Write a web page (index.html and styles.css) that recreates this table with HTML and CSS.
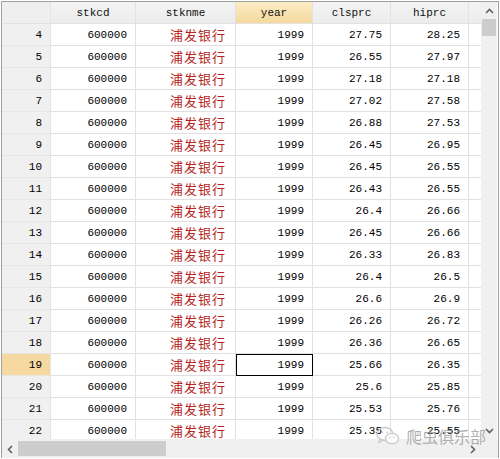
FILE: index.html
```html
<!DOCTYPE html>
<html>
<head>
<meta charset="utf-8">
<link rel="stylesheet" href="styles.css">
</head>
<body>
<div class="window">
  <div class="main">
    <div class="grid-area">
      <div class="grid">
        <div class="hd corner"></div>
        <div class="hd">stkcd</div>
        <div class="hd">stknme</div>
        <div class="hd sel">year</div>
        <div class="hd">clsprc</div>
        <div class="hd">hiprc</div>
        <div class="hd last"></div>
      </div>
      <div class="rows" id="rows"></div>
    </div>
    <div class="vscroll">
      <div class="arrow up"><svg width="9" height="6" viewBox="0 0 9 6"><path d="M1 5 L4.5 1.5 L8 5" fill="none" stroke="#606060" stroke-width="1.6"/></svg></div>
      <div class="vthumb"></div>
      <div class="vtrack"></div>
      <div class="arrow down"><svg width="9" height="6" viewBox="0 0 9 6"><path d="M1 1 L4.5 4.5 L8 1" fill="none" stroke="#606060" stroke-width="1.6"/></svg></div>
    </div>
  </div>
  <div class="bottom">
    <div class="hscroll">
      <div class="harrow"><svg width="6" height="9" viewBox="0 0 6 9"><path d="M5 1 L1.5 4.5 L5 8" fill="none" stroke="#606060" stroke-width="1.6"/></svg></div>
      <div class="hthumb"></div>
      <div class="htrack"></div>
      <div class="harrow"><svg width="6" height="9" viewBox="0 0 6 9"><path d="M1 1 L4.5 4.5 L1 8" fill="none" stroke="#606060" stroke-width="1.6"/></svg></div>
    </div>
    <div class="sc-corner"></div>
  </div>
  <div class="watermark">
    <svg class="wechat" width="24" height="20" viewBox="0 0 24 20">
      <ellipse cx="9" cy="8" rx="8" ry="6.5" fill="none" stroke="#c8c8c8" stroke-width="1.3"/>
      <path d="M4 13 L3 16.5 L7 14.2" fill="none" stroke="#c8c8c8" stroke-width="1.2"/>
      <ellipse cx="16" cy="12.5" rx="6.5" ry="5.2" fill="#fff" fill-opacity="0.85" stroke="#c8c8c8" stroke-width="1.3"/>
      <circle cx="6.3" cy="6.3" r="0.9" fill="#c8c8c8"/>
      <circle cx="11.2" cy="6.3" r="0.9" fill="#c8c8c8"/>
      <circle cx="14" cy="11.3" r="0.8" fill="#c8c8c8"/>
      <circle cx="18" cy="11.3" r="0.8" fill="#c8c8c8"/>
    </svg>
    <span class="wm-text">爬虫俱乐部</span>
  </div>
</div>
<script src="app.js"></script>
</body>
</html>
```
FILE: app.js
```js
var data = [
  [4, "27.75", "28.25"], [5, "26.55", "27.97"], [6, "27.18", "27.18"],
  [7, "27.02", "27.58"], [8, "26.88", "27.53"], [9, "26.45", "26.95"],
  [10, "26.45", "26.55"], [11, "26.43", "26.55"], [12, "26.4", "26.66"],
  [13, "26.45", "26.66"], [14, "26.33", "26.83"], [15, "26.4", "26.5"],
  [16, "26.6", "26.9"], [17, "26.26", "26.72"], [18, "26.36", "26.65"],
  [19, "25.66", "26.35"], [20, "25.6", "25.85"], [21, "25.53", "25.76"],
  [22, "25.35", "25.55"]
];
var html = "";
data.forEach(function (r) {
  var sel = r[0] === 19;
  html += '<div class="grid row">' +
    '<div class="rh' + (sel ? ' sel' : '') + '">' + r[0] + '</div>' +
    '<div class="c num">600000</div>' +
    '<div class="c str">浦发银行</div>' +
    '<div class="c num' + (sel ? ' cur' : '') + '">1999</div>' +
    '<div class="c num">' + r[1] + '</div>' +
    '<div class="c num">' + r[2] + '</div>' +
    '<div class="c"></div>' +
    '</div>';
});
document.getElementById("rows").innerHTML = html;
```
FILE: styles.css
```css
html, body {
  margin: 0;
  padding: 0;
  background: #fff;
}
.window {
  position: relative;
  width: 500px;
  height: 459px;
  box-sizing: border-box;
  border: 1px solid #fff;
  overflow: hidden;
  font-family: "Liberation Mono", "Courier New", monospace;
  font-size: 11px;
  color: #000;
}
.window::before {
  content: "";
  position: absolute;
  inset: 0;
  border-top: 1px solid #a0a0a0;
  border-left: 1px solid #a0a0a0;
  border-right: 1px solid #a0a0a0;
  pointer-events: none;
  z-index: 3;
}
.main {
  display: flex;
  height: 438px;
  padding-top: 1px;
  padding-left: 1px;
  box-sizing: border-box;
}
.grid-area {
  width: 479px;
  overflow: hidden;
  height: 437px;
}
.vscroll {
  width: 16px;
  background: #f0f0f0;
  display: flex;
  flex-direction: column;
  height: 437px;
}
.arrow {
  height: 17px;
  display: flex;
  align-items: center;
  justify-content: center;
}
.vthumb {
  margin: 0 1px;
  height: 17px;
  background: #cdcdcd;
}
.vtrack { flex: 1; }
.grid {
  display: grid;
  grid-template-columns: 49px 85px 100px 77px 78px 78px 40px;
  height: 22px;
}
.hd {
  box-sizing: border-box;
  border-right: 1px solid #e2e2e2;
  border-bottom: 1px solid #e2e2e2;
  background: linear-gradient(#f3f3f3, #ececec);
  display: flex;
  align-items: center;
  justify-content: center;
  color: #111;
  padding-top: 1px;
}
.hd.sel {
  background: linear-gradient(#fcebc4, #f4d99f);
}
.hd.corner {
  background: #efefef;
}
.row { height: 22px; }
.rh, .c {
  box-sizing: border-box;
  border-right: 1px solid #e0e0e0;
  border-bottom: 1px solid #e0e0e0;
  display: flex;
  align-items: center;
  justify-content: flex-end;
  white-space: nowrap;
}
.rh {
  background: #f0f0f0;
  border-right-color: #e4e4e4;
  border-bottom-color: #e6e6e6;
  padding-right: 8px;
}
.rh.sel { background: #f6d9a1; }
.num { padding-right: 8px; }
.str {
  color: #b82424;
  font-family: "Noto Sans CJK SC", sans-serif;
  font-size: 13px;
  letter-spacing: 1px;
  padding-right: 9px;
}
.c.cur {
  outline: 1px solid #000;
  outline-offset: -1px;
}
.bottom {
  display: flex;
  height: 19px;
}
.hscroll {
  width: 480px;
  background: #f0f0f0;
  display: flex;
  align-items: stretch;
  padding-top: 1px;
  box-sizing: border-box;
}
.harrow {
  width: 17px;
  display: flex;
  align-items: center;
  justify-content: center;
}
.hthumb {
  width: 148px;
  margin: 1px 0 2px;
  background: #cdcdcd;
}
.htrack { flex: 1; }
.sc-corner {
  width: 17px;
  background: #f0f0f0;
}
.watermark {
  position: absolute;
  left: 375px;
  top: 423px;
  display: flex;
  align-items: center;
  gap: 6px;
  z-index: 2;
  pointer-events: none;
}
.wm-text {
  font-family: "Noto Sans CJK SC", sans-serif;
  font-size: 16px;
  color: rgba(150, 150, 150, 0.75);
}
```
